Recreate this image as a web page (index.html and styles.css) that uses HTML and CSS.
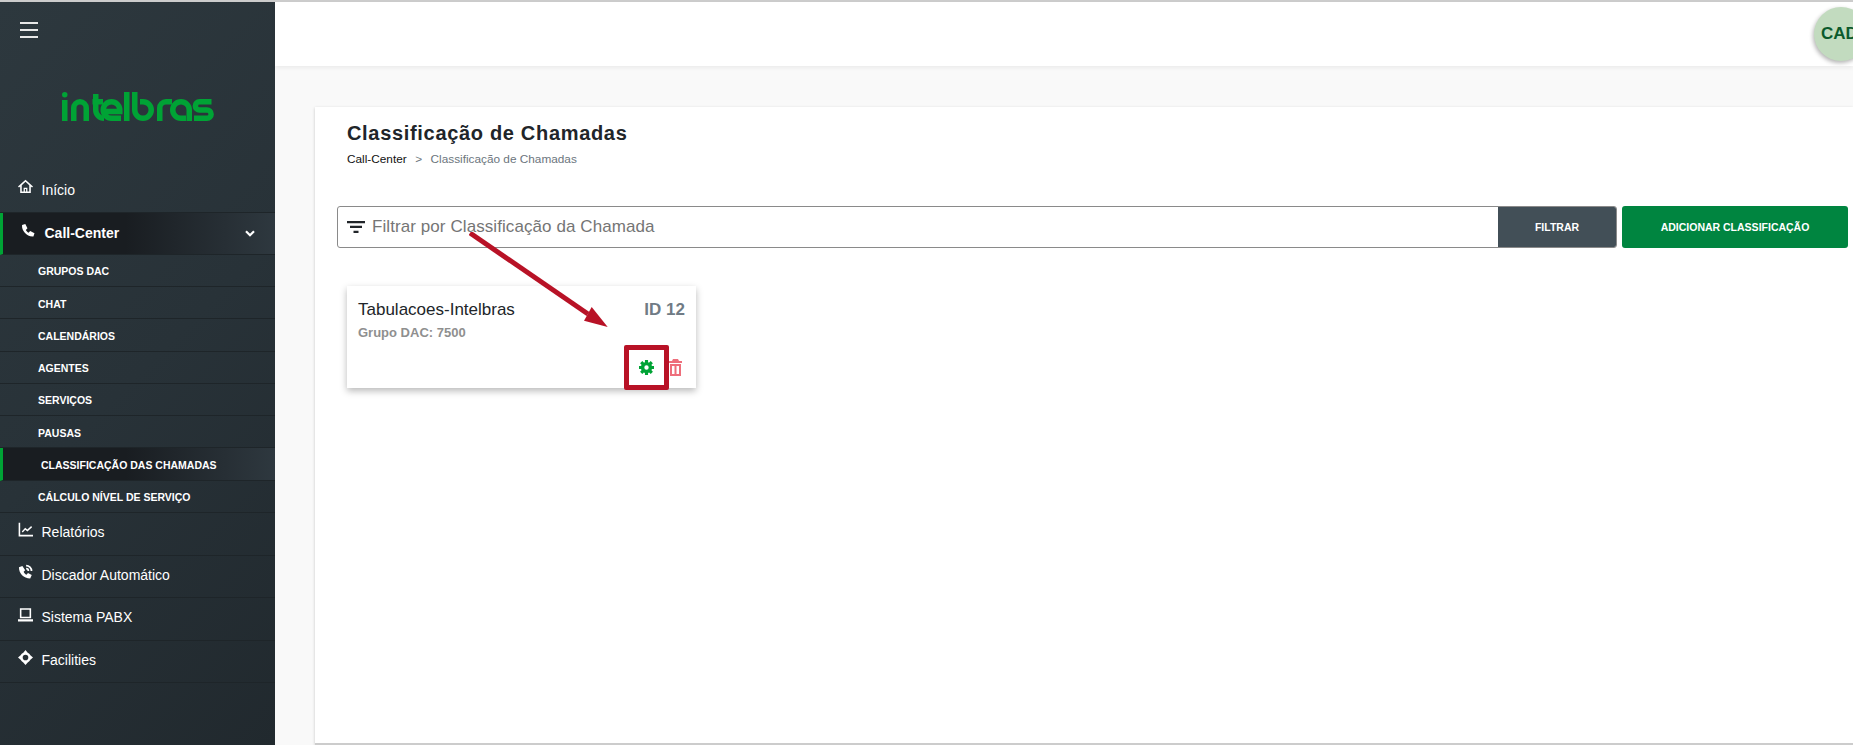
FILE: index.html
```html
<!DOCTYPE html>
<html lang="pt-BR">
<head>
    <meta charset="UTF-8">
    <title>Classificação de Chamadas</title>
    <link rel="stylesheet" href="styles.css">
</head>
<body>
    <div id="app">
        <div id="sidebar">
            <div class="burger"><span></span><span></span><span></span></div>
            <div class="logo">
                <svg width="152" height="30" viewBox="0 0 152 30" fill="none" stroke="#00a335" stroke-width="5.5" role="img" aria-label="intelbras">
                    <circle cx="2.750" cy="2.750" r="2.750" fill="#00a335" stroke="none"/>
                    <path d="M2.750 8v21"/>
                    <path d="M11.750 29V16a6.250 6.250 0 0 1 12.500 0v13"/>
                    <path d="M33.750 2v16a8.250 8.250 0 0 0 8.250 8.250M30.500 9.750H41"/>
                    <path d="M41.250 18a8.250 8.250 0 0 1 16.500 0v1.500H41.500M41.250 18a8.250 8.250 0 0 0 8.250 8.250H59"/>
                    <path d="M64.750 0v29"/>
                    <path d="M72.750 0v18a8.250 8.250 0 1 0 8.250-8.250h-3"/>
                    <path d="M97.750 29V16a6.250 6.250 0 0 1 6.250-6.250h6"/>
                    <path d="M127.250 29V18a8.250 8.250 0 1 0-8.250 8.250h5"/>
                    <path d="M149.500 9.750H137.500a4.125 4.125 0 0 0 0 8.250H145a4.125 4.125 0 0 1 0 8.250H132"/>
                </svg>
            </div>
            <ul class="menu">
                <li class="item">
                    <svg class="ico" viewBox="0 0 24 24"><path fill-rule="evenodd" d="M12 1 0 12l1.600 1.700L3.500 12v10.500h17V12l1.900 1.700L24 12zM18 20h-3v-6H9v6H6V9.800l6-5.500 6 5.500zM11 16h2v4h-2z"/></svg>
                    <span>Início</span>
                </li>
                <li class="item open">
                    <svg class="ico" viewBox="0 0 24 24"><path d="M7 0 1 2C0 13 10 24 22 23l2-6-8-4-3 3c-2-1-4-3-5-5l3-3z"/></svg>
                    <span>Call-Center</span>
                    <svg class="chev" viewBox="0 0 10 7"><path d="M1 1.200 5 5.200l4-4" fill="none" stroke="#fff" stroke-width="2.200"/></svg>
                </li>
                <li class="sub">GRUPOS DAC</li>
                <li class="sub">CHAT</li>
                <li class="sub">CALENDÁRIOS</li>
                <li class="sub">AGENTES</li>
                <li class="sub">SERVIÇOS</li>
                <li class="sub">PAUSAS</li>
                <li class="sub selected">CLASSIFICAÇÃO DAS CHAMADAS</li>
                <li class="sub">CÁLCULO NÍVEL DE SERVIÇO</li>
                <li class="item">
                    <svg class="ico" viewBox="0 0 24 24"><path d="M1 1h2.500v19.500H24V23H1z"/><path d="m6 15 5.500-6 3.500 3 6-5.500 1.600 1.700-7.500 7-3.500-3-4 4.500z"/></svg>
                    <span>Relatórios</span>
                </li>
                <li class="item">
                    <svg class="ico" viewBox="0 0 24 24"><path d="M7 3 1.500 5C1.500 15 9 23 19.500 23l2.500-5.500-6-3-2.500 2.500c-2-1-3.500-2.800-4.500-4.800L11.500 10z"/><path d="M13 1a10 10 0 0 1 10 10h-2.800A7.200 7.200 0 0 0 13 3.800zM13 6a5 5 0 0 1 5 5h-2.800A2.200 2.200 0 0 0 13 8.800z"/></svg>
                    <span>Discador Automático</span>
                </li>
                <li class="item">
                    <svg class="ico" viewBox="0 0 24 24"><path fill-rule="evenodd" d="M3 2h18v16H3zM5.500 4.500v11h13v-11zM0 19.500h24V23H0z"/></svg>
                    <span>Sistema PABX</span>
                </li>
                <li class="item">
                    <svg class="ico" viewBox="0 0 24 24"><path fill-rule="evenodd" d="M12 0l3.500 4.200a8.500 8.500 0 0 1 4.300 4.300L24 12l-4.200 3.500a8.500 8.500 0 0 1-4.300 4.300L12 24l-3.500-4.200a8.500 8.500 0 0 1-4.300-4.300L0 12l4.200-3.500a8.500 8.500 0 0 1 4.300-4.300zM12 7.500a4.500 4.500 0 1 0 0 9 4.500 4.500 0 0 0 0-9z"/></svg>
                    <span>Facilities</span>
                </li>
            </ul>
        </div>
        <div id="main">
            <div class="topbar">
                <div class="avatar">CAD</div>
            </div>
            <div class="content">
                <div class="panel">
                    <h1>Classificação de Chamadas</h1>
                    <div class="crumbs">
                        <span class="first">Call-Center</span>
                        <span class="sep">&gt;</span>
                        <span>Classificação de Chamadas</span>
                    </div>
                    <div class="filters">
                        <div class="search">
                            <svg class="filter-ico" viewBox="0 0 18 12"><path d="M0 0h18v2.200H0zM3 4.800h12V7H3zM6.500 9.800h5V12h-5z"/></svg>
                            <span class="placeholder">Filtrar por Classificação da Chamada</span>
                            <div class="btn-filter">FILTRAR</div>
                        </div>
                        <div class="btn-add">ADICIONAR CLASSIFICAÇÃO</div>
                    </div>
                    <div class="card">
                        <div class="card-head">
                            <span class="card-title">Tabulacoes-Intelbras</span>
                            <span class="card-id">ID 12</span>
                        </div>
                        <div class="card-group">Grupo DAC: 7500</div>
                        <div class="card-actions">
                            <svg class="gear" viewBox="0 0 24 24" fill="#00a335">
                                <path fill-rule="evenodd" d="M12 3a9 9 0 1 0 0 18 9 9 0 0 0 0-18zM12 8.500a3.500 3.500 0 1 1 0 7 3.500 3.500 0 0 1 0-7z"/>
                                <path d="M9.500 0h5v5h-5zM9.500 19h5v5h-5zM0 9.500h5v5H0zM19 9.500h5v5h-5z"/>
                                <path d="M9.500 0h5v5h-5zM9.500 19h5v5h-5zM0 9.500h5v5H0zM19 9.500h5v5h-5z" transform="rotate(45 12 12)"/>
                            </svg>
                            <svg class="trash" viewBox="0 0 13 17" fill="#ee6e7b">
                                <path d="M4 0h5l1 2h3v2H0V2h3z"/>
                                <path fill-rule="evenodd" d="M1 5h11v12H1zM3 7v8h2.500V7zM7.500 7v8H10V7z"/>
                            </svg>
                        </div>
                    </div>
                </div>
            </div>
        </div>
        <svg class="arrow" width="170" height="115" viewBox="0 0 170 115">
            <path d="M1 1 119 82" fill="none" stroke="#b81226" stroke-width="5"/>
            <path d="M138.700 95 122.700 75 115 88.700z" fill="#b81226"/>
        </svg>
        <div class="highlight"></div>
    </div>
</body>
</html>
```

FILE: styles.css
```css
*{
    margin: 0;
    padding: 0;
    box-sizing: border-box;
}
ul,ol{
    list-style: none;
}
html,body{
    height: 100%;
    overflow: hidden;
}
body{
    font-family: "Liberation Sans", Arial, sans-serif;
    background: #f9f9f9;
}
#app{
    position: relative;
    display: flex;
    height: 745px;
    border-top: 2px solid #cccccc;
}
#sidebar{
    width: 275px;
    flex-shrink: 0;
    background: linear-gradient(135deg, #2d383e 0%, #283238 50%, #21292e 100%);
    color: white;
}
.burger{
    padding: 20px 0 0 20px;
    height: 80px;
}
.burger span{
    display: block;
    width: 18px;
    height: 2px;
    margin-bottom: 5px;
    background: #e8e8e8;
}
.logo{
    height: 88.400px;
    padding-left: 62px;
    padding-top: 10px;
}
.item{
    height: 42.600px;
    display: flex;
    align-items: center;
    padding: 0 0 3px 17px;
    font-size: 14px;
    border-bottom: 1px solid #1e2529;
}
.item span{
    margin-left: 7.500px;
}
.ico{
    width: 17px;
    height: 15px;
    fill: white;
    margin-top: -6px;
}
.item.open{
    height: 42px;
    padding: 0 0 0 18px;
    font-weight: bold;
    background: linear-gradient(90deg, #191d21 45%, #2e383f 100%);
    border-left: 3px solid #00a335;
}
.item.open .ico{
    width: 14px;
    height: 13px;
}
.item.open span{
    margin-left: 9.500px;
}
.chev{
    width: 10px;
    height: 7px;
    margin-left: auto;
    margin-right: 20px;
}
.sub{
    height: 32.250px;
    display: flex;
    align-items: center;
    padding: 1.500px 0 0 38px;
    font-size: 10.500px;
    font-weight: bold;
    border-bottom: 1px solid #1e2529;
}
.sub.selected{
    background: linear-gradient(90deg, #191d21 45%, #2e383f 100%);
    border-left: 3px solid #00a335;
}
#main{
    flex: 1;
    min-width: 0;
}
.topbar{
    height: 64px;
    background: white;
    box-shadow: 0 2px 4px rgba(0,0,0,0.06);
    position: relative;
    overflow: hidden;
}
.avatar{
    position: absolute;
    left: 1539px;
    top: 5px;
    width: 54px;
    height: 54px;
    border-radius: 50%;
    background: #c2dbbf;
    color: #0b5a2c;
    font-size: 17px;
    font-weight: bold;
    line-height: 54px;
    padding-left: 7px;
    box-shadow: -1px 2px 4px rgba(0,0,0,0.3);
}
.content{
    padding: 41px 0 0 40px;
}
.panel{
    background: white;
    height: 638px;
    padding: 14px 5px 0 22px;
    border-bottom: 2px solid #cccccc;
    box-shadow: 0 1px 3px rgba(0,0,0,0.2);
}
h1{
    padding-left: 10px;
    font-size: 20px;
    line-height: 24px;
    letter-spacing: 0.680px;
    color: #212529;
}
.crumbs{
    padding-left: 10px;
    margin-top: 7px;
    font-size: 11.800px;
    line-height: 14px;
    color: #6c757d;
    display: flex;
    gap: 8.500px;
}
.crumbs .first{
    color: #111;
}
.filters{
    margin-top: 40px;
    display: flex;
    gap: 5px;
}
.search{
    flex: 1;
    height: 42px;
    display: flex;
    align-items: center;
    border: 1px solid #8a8a8a;
    border-radius: 3px;
    padding-left: 9px;
    overflow: hidden;
}
.filter-ico{
    width: 18px;
    height: 12px;
    fill: #212529;
    margin-right: 7px;
}
.placeholder{
    flex: 1;
    font-size: 17px;
    letter-spacing: 0.080px;
    color: #757575;
}
.btn-filter{
    width: 118px;
    height: 100%;
    background: #424f57;
    color: white;
    font-size: 10.500px;
    font-weight: bold;
    line-height: 40px;
    text-align: center;
}
.btn-add{
    width: 226px;
    height: 42px;
    background: #008540;
    border-radius: 3px;
    color: white;
    font-size: 10.500px;
    font-weight: bold;
    line-height: 42px;
    text-align: center;
}
.card{
    width: 349px;
    height: 102px;
    margin: 38px 0 0 10px;
    padding: 14px 11px 0 11px;
    background: white;
    box-shadow: 0 3px 7px rgba(0,0,0,0.28);
}
.card-head{
    display: flex;
    justify-content: space-between;
    align-items: center;
}
.card-title{
    font-size: 17px;
    color: #212529;
}
.card-id{
    font-size: 17px;
    font-weight: bold;
    color: #707b85;
}
.card-group{
    margin-top: 5px;
    font-size: 13px;
    font-weight: bold;
    color: #8f8f8f;
}
.card-actions{
    display: flex;
    justify-content: flex-end;
    align-items: center;
    gap: 15px;
    margin: 19px 3px 0 0;
}
.gear{
    width: 15px;
    height: 15px;
}
.trash{
    width: 13px;
    height: 17px;
}
.arrow{
    position: absolute;
    left: 469px;
    top: 230px;
}
.highlight{
    position: absolute;
    left: 624px;
    top: 343px;
    width: 45px;
    height: 45px;
    border: 5px solid #b81226;
    border-radius: 2px;
}
```
